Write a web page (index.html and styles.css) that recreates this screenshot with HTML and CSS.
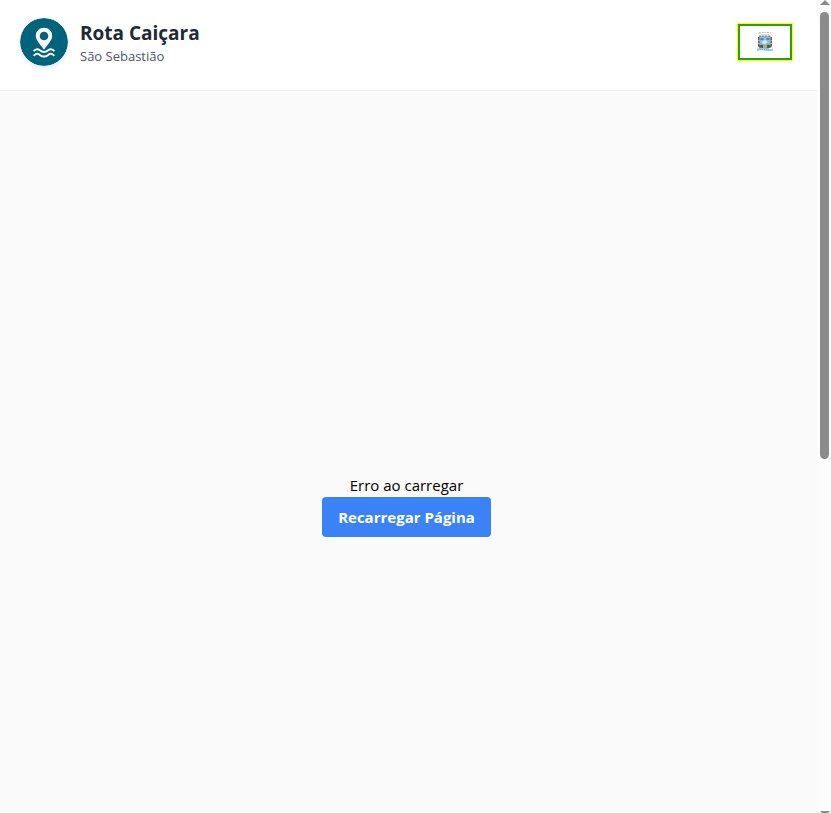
FILE: index.html
```html
<!DOCTYPE html>
<html lang="pt-BR">
<head>
<meta charset="utf-8">
<meta name="viewport" content="width=device-width, initial-scale=1">
<title>Rota Caiçara</title>
<link rel="stylesheet" href="styles.css">
</head>
<body>
<div class="page">
  <header class="header">
    <div class="brand">
      <svg class="brand-logo" viewBox="0 0 48 48" aria-hidden="true">
        <circle cx="24" cy="24" r="24" fill="#00637c"/>
        <path fill="#fbf8f1" fill-rule="evenodd" d="M24 9.800c-4.700 0-8.200 3.500-8.200 8 0 4.700 4.600 8.600 8.200 14 3.600-5.400 8.200-9.300 8.200-14 0-4.500-3.500-8-8.200-8zm0 3.900a4.300 4.300 0 1 1 0 8.600 4.300 4.300 0 0 1 0-8.600z"/>
        <g fill="none" stroke="#fbf8f1" stroke-width="2" stroke-linecap="round" stroke-linejoin="round">
          <path d="M14.200 32.600q3-2.600 5.600-.3 2 1.700 4.200 1.700t4.200-1.700q2.600-2.300 5.600.3"/>
          <path d="M14.200 37.200q3-2.600 5.600-.3 2 1.700 4.200 1.700t4.200-1.700q2.600-2.300 5.600.3"/>
        </g>
      </svg>
      <div class="brand-text">
        <h1 class="brand-name">Rota Caiçara</h1>
        <p class="brand-place">São Sebastião</p>
      </div>
    </div>
    <div class="flag">
      <svg class="crest" viewBox="0 0 18 22" aria-hidden="true">
        <path d="M3 2Q9 .8 15 2" fill="none" stroke="#b5b5b5" stroke-dasharray="2 .7"/>
        <path d="M5 3.500h8" stroke="#d8dcdf"/>
        <path d="M3.500 5.500h11v10q-1 3-5.500 3t-5.500-3z" fill="#84bfe6"/>
        <path d="M3 5.200h12" stroke="#8a9093" stroke-width="1.400" stroke-dasharray="2.500 .5"/>
        <path d="M2.800 6v9M15.200 6v9" stroke="#76524d" stroke-width="1.600" stroke-dasharray="3 .5"/>
        <path d="M4.500 7h3v2h-3zM10.500 7h3v2h-3z" fill="#6d7f8c"/>
        <path d="M6.500 10l3-1 2 2-2.500 2-3-1z" fill="#d5ebf6"/>
        <path d="M2 15.500q2-2.500 5-1.500l2 1 3-1.500q3 0 4 2.500l-3 1H4z" fill="#4b5f4c"/>
        <path d="M7 14h4v3H7z" fill="#c5a267"/>
        <path d="M1 17.500q4-1.500 8 0t8 0v2q-4 1-8 0t-8 1z" fill="#9ccbea"/>
        <path d="M4 18.500h10" stroke="#6e93ad" stroke-width=".7" stroke-dasharray="1 1"/>
      </svg>
    </div>
  </header>
  <main class="content">
    <p class="message">Erro ao carregar</p>
    <button class="reload" type="button">Recarregar Página</button>
  </main>
</div>
<div class="scrollbar" aria-hidden="true">
  <svg class="arrow" viewBox="0 0 10 5"><path d="M5 0l5 5H0z"/></svg>
  <div class="thumb"></div>
  <svg class="arrow arrow-down" viewBox="0 0 10 5"><path d="M0 3h10L8 5H2z"/></svg>
</div>
</body>
</html>
```
FILE: styles.css
```css
* {
  box-sizing: border-box;
}

body {
  margin: 0;
  height: 100vh;
  display: flex;
  overflow: hidden;
  background: #fafafa;
  font-family: "Segoe UI", "Open Sans", "Noto Sans", sans-serif;
  color: #000;
}

h1, p {
  margin: 0;
}

.page {
  flex: 1;
  display: flex;
  flex-direction: column;
}

.header {
  display: flex;
  justify-content: space-between;
  align-items: flex-start;
  padding: 18px 24px 24px 20px;
  background: #fff;
  border-bottom: 1px solid #f0f0f0;
}

.brand {
  display: flex;
  align-items: center;
  gap: 12px;
}

.brand-logo {
  display: block;
  width: 48px;
  height: 48px;
  border-radius: 50%;
  box-shadow: 0 2px 4px rgba(0, 0, 0, 0.1);
}

.brand-text {
  padding-top: 2px;
}

.brand-name {
  font-size: 19px;
  font-weight: 700;
  line-height: 26px;
  color: #1f2937;
}

.brand-place {
  font-size: 13px;
  line-height: 20px;
  color: #4b5563;
}

.flag {
  display: flex;
  align-items: center;
  justify-content: center;
  width: 56px;
  height: 38px;
  margin-top: 5px;
  border: 1px solid #ff0;
  box-shadow: inset 0 0 0 2px #2f9e0b;
}

.crest {
  width: 18px;
  height: 22px;
}

.content {
  flex: 1;
  display: flex;
  flex-direction: column;
  align-items: center;
  justify-content: center;
  padding: 106px 4px 0 0;
}

.message {
  font-size: 15px;
  line-height: 24px;
}

.reload {
  padding: 8px 16px;
  border: 0;
  border-radius: 4px;
  background: #3b82f6;
  color: #fff;
  font-family: inherit;
  font-size: 15px;
  font-weight: 700;
  line-height: 24px;
}

.scrollbar {
  width: 14px;
  padding: 0 2px 0 3px;
  display: flex;
  flex-direction: column;
  align-items: center;
  background: #fcfcfc;
}

.arrow {
  display: block;
  width: 10px;
  height: 5px;
  fill: #8b8b8b;
}

.thumb {
  width: 9px;
  height: 55%;
  margin-top: 7px;
  border-radius: 5px;
  background: #8b8b8b;
}

.arrow-down {
  margin-top: auto;
}
```
